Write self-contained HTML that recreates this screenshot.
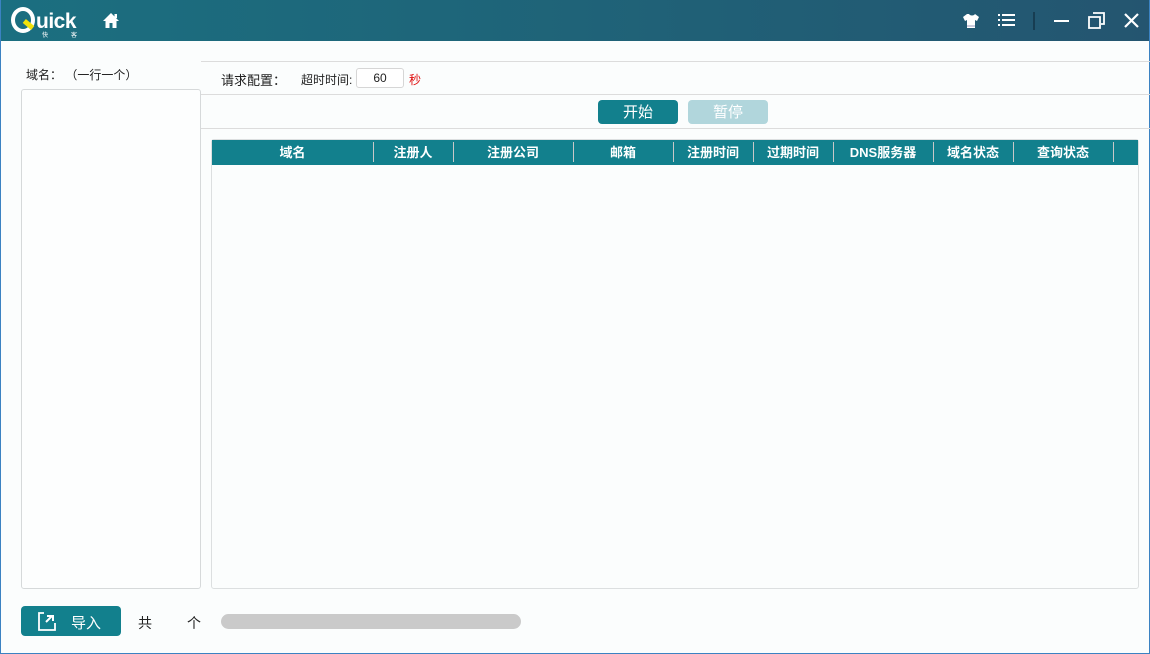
<!DOCTYPE html>
<html><head><meta charset="utf-8"><style>
*{margin:0;padding:0;box-sizing:border-box}
body{width:1150px;height:654px;overflow:hidden;background:#fbfdfd;font-family:"Liberation Sans","Noto Sans CJK SC",sans-serif;position:relative;font-size:12px;color:#222}
.a{position:absolute}
#tb{left:0;top:0;width:1150px;height:41px;background:linear-gradient(90deg,#1b6f80,#1f6378 50%,#245570);}
.hl{position:absolute;height:1px;background:#dcdcdc}
.col{position:absolute;top:143px;height:20px;line-height:20px;color:#fff;font-weight:bold;font-size:13px;text-align:center}
.sep{position:absolute;top:142px;width:1px;height:20px;background:#c8c8c8}
</style></head><body>
<div class="a" id="tb"></div>
<div class="a" style="left:0;top:0;width:1150px;height:654px;border:1px solid #3b82c2;border-top:none"></div>
<div class="a" style="left:11px;top:7px;width:24px;height:26px;border:4px solid #fff;border-radius:50%"></div>
<div class="a" style="left:23px;top:22px;width:11px;height:5px;background:#f2e20a;transform:rotate(40deg)"></div>
<div class="a" style="left:36px;top:10px;color:#fff;font-size:21px;font-weight:bold;letter-spacing:-0.5px">uick</div>
<div class="a" style="left:42px;top:30px;color:#fff;font-size:6px">快</div>
<div class="a" style="left:71px;top:30px;color:#fff;font-size:6px">客</div>
<svg class="a" style="left:102px;top:12px" width="18" height="17" viewBox="0 0 18 17"><path d="M9 1L1 9h2.5v7h4v-5h3v5h4V9H17z" fill="#fff"/><rect x="12.5" y="2" width="2.5" height="4" fill="#fff"/></svg>
<svg class="a" style="left:962px;top:13px" width="18" height="16" viewBox="0 0 18 16"><path d="M5 1L1 4l2 4 2-1v8h8V7l2 1 2-4-4-3c-1 2-5 2-6 0z" fill="#fff"/><rect x="5" y="12" width="8" height="2" fill="#ccd"/></svg>
<svg class="a" style="left:998px;top:13px" width="17" height="15"><g fill="#fff"><rect x="0" y="1" width="2" height="2"/><rect x="4" y="1" width="13" height="2"/><rect x="0" y="6" width="2" height="2"/><rect x="4" y="6" width="13" height="2"/><rect x="0" y="11" width="2" height="2"/><rect x="4" y="11" width="13" height="2"/></g></svg>
<div class="a" style="left:1033px;top:12px;width:2px;height:18px;background:#173d52"></div>
<div class="a" style="left:1054px;top:20px;width:15px;height:2px;background:#fff"></div>
<svg class="a" style="left:1088px;top:12px" width="18" height="18"><path d="M5 1h11v11h-3M1 5h11v11H1z" fill="none" stroke="#fff" stroke-width="1.8"/></svg>
<svg class="a" style="left:1124px;top:13px" width="15" height="15"><path d="M1 1L14 14M14 1L1 14" stroke="#fff" stroke-width="2.2"/></svg>
<div class="a" style="left:26px;top:66px;font-size:12px">域名： （一行一个）</div>
<div class="a" style="left:21px;top:89px;width:180px;height:500px;border:1px solid #d6d9da;border-radius:3px;background:#fdfefe"></div>
<div class="hl" style="left:201px;top:61px;width:949px"></div>
<div class="hl" style="left:201px;top:94px;width:949px"></div>
<div class="hl" style="left:201px;top:128px;width:949px"></div>
<div class="a" style="left:221px;top:70px;font-size:13px">请求配置：</div>
<div class="a" style="left:301px;top:71px;font-size:12px">超时时间:</div>
<div class="a" style="left:356px;top:68px;width:48px;height:20px;border:1px solid #d6d6d6;border-radius:3px;background:#fff;text-align:center;line-height:18px;font-size:12px">60</div>
<div class="a" style="left:409px;top:71px;font-size:12px;color:#e01010">秒</div>
<div class="a" style="left:598px;top:100px;width:80px;height:24px;background:#12808d;border-radius:4px;color:#fff;text-align:center;line-height:25px;font-size:15px">开始</div>
<div class="a" style="left:688px;top:100px;width:80px;height:24px;background:#b1d6dc;border-radius:4px;color:#fff;text-align:center;line-height:25px;font-size:15px">暂停</div>
<div class="a" style="left:211px;top:139px;width:928px;height:450px;border:1px solid #dcdfe0;border-radius:3px;background:#fbfdfd"></div>
<div class="a" style="left:212px;top:140px;width:926px;height:25px;background:#12808d"></div>
<div class="col" style="left:212px;width:161px">域名</div>
<div class="col" style="left:373px;width:80px">注册人</div>
<div class="col" style="left:453px;width:120px">注册公司</div>
<div class="col" style="left:573px;width:100px">邮箱</div>
<div class="col" style="left:673px;width:80px">注册时间</div>
<div class="col" style="left:753px;width:80px">过期时间</div>
<div class="col" style="left:833px;width:100px">DNS服务器</div>
<div class="col" style="left:933px;width:80px">域名状态</div>
<div class="col" style="left:1013px;width:100px">查询状态</div>
<div class="sep" style="left:373px"></div><div class="sep" style="left:453px"></div><div class="sep" style="left:573px"></div><div class="sep" style="left:673px"></div><div class="sep" style="left:753px"></div><div class="sep" style="left:833px"></div><div class="sep" style="left:933px"></div><div class="sep" style="left:1013px"></div><div class="sep" style="left:1113px"></div>
<div class="a" style="left:21px;top:606px;width:100px;height:30px;background:#12808d;border-radius:4px"></div>
<svg class="a" style="left:37px;top:611px" width="22" height="21"><path d="M7 2H2v17h16v-7" fill="none" stroke="#fff" stroke-width="1.8"/><path d="M9 11l6-6M10 5h6v5" fill="none" stroke="#fff" stroke-width="2"/></svg>
<div class="a" style="left:71px;top:612px;color:#fff;font-size:15px">导入</div>
<div class="a" style="left:138px;top:613px;font-size:14px">共</div>
<div class="a" style="left:187px;top:613px;font-size:14px">个</div>
<div class="a" style="left:221px;top:614px;width:300px;height:15px;background:#cacaca;border-radius:8px"></div>
</body></html>
